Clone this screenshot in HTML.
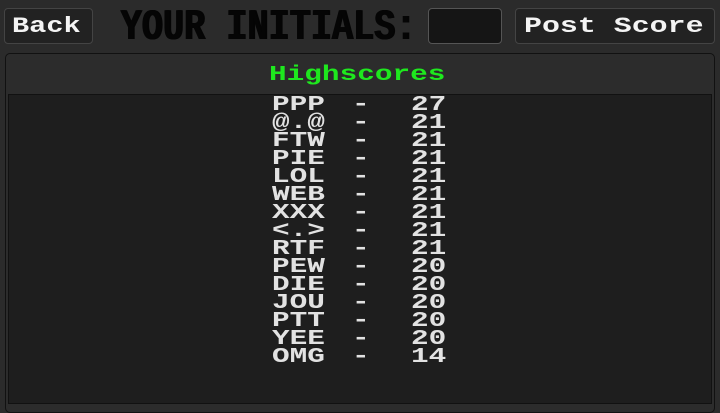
<!DOCTYPE html>
<html><head><style>
*{margin:0;padding:0;box-sizing:border-box}
body{width:720px;height:408px;background:#2b2b2b;position:relative;overflow:hidden;font-family:"Liberation Mono",monospace;font-weight:bold}
.btn{position:absolute;top:8px;height:36px;background:#222;border:1px solid #444;border-radius:4px}
.bt{position:absolute;top:10px;color:#f4f4f4;font-size:22px;line-height:34px;white-space:pre;transform-origin:left}
.title{position:absolute;left:120px;top:6px;font-size:44px;line-height:44px;color:#050505;white-space:pre;transform:scaleX(0.8);transform-origin:left;text-shadow:1px 0 #050505,2px 0 #050505}
.inp{position:absolute;left:428px;top:8px;width:74px;height:36px;background:#151515;border:1px solid #555;border-radius:4px}
.panel{position:absolute;left:5px;top:53px;width:710px;height:360px;background:#2c2c2c;border:1px solid #111;border-radius:5px}
.hd{position:absolute;left:269px;top:64px;color:#1ee81e;font-size:21px;line-height:24px;transform:scaleX(1.4);transform-origin:left}
.list{position:absolute;left:8px;top:94px;width:704px;height:310px;background:#1e1e1e;border:1px solid #111}
.col{position:absolute;top:97px;color:#e2e2e2;font-size:21px;line-height:18px;white-space:pre;transform:scaleX(1.4);transform-origin:left}
</style></head><body>
<div class="btn" style="left:4px;width:89px"></div>
<div class="bt" style="left:12px;transform:scaleX(1.3)">Back</div>
<div class="title">YOUR INITIALS:</div>
<div class="inp"></div>
<div class="btn" style="left:515px;width:200px"></div>
<div class="bt" style="left:524px;transform:scaleX(1.36)">Post Score</div>
<div class="panel"></div>
<div class="hd">Highscores</div>
<div class="list"></div>
<div class="col" style="left:272px">PPP
@.@
FTW
PIE
LOL
WEB
XXX
&lt;.&gt;
RTF
PEW
DIE
JOU
PTT
YEE
OMG</div>
<div class="col" style="left:352px">-
-
-
-
-
-
-
-
-
-
-
-
-
-
-</div>
<div class="col" style="left:411px">27
21
21
21
21
21
21
21
21
20
20
20
20
20
14</div>
</body></html>
